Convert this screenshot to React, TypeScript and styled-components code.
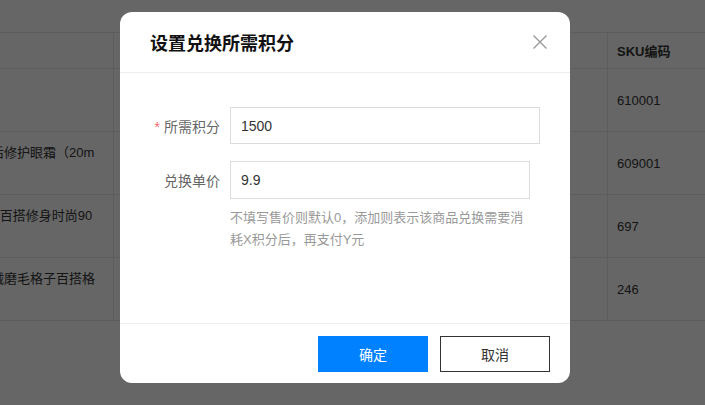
import React from 'react'
import styled, { createGlobalStyle } from 'styled-components'

const colors = {
  line: '#e8e8e8',
  text: '#333333',
  label: '#666666',
  hint: '#999999',
  primary: '#0081ff',
  required: '#f56c6c',
  inputBorder: '#dcdcdc',
}

const GlobalStyle = createGlobalStyle`
  html, body {
    margin: 0;
    padding: 0;
  }
  body {
    width: 705px;
    height: 405px;
    overflow: hidden;
    background: #ffffff;
    font-family: "Liberation Sans", "Noto Sans CJK SC", sans-serif;
  }
  * {
    box-sizing: border-box;
  }
`

const Page = styled.div`
  position: relative;
  width: 705px;
  height: 405px;
  overflow: hidden;
  padding-top: 32px;
`

const Table = styled.div`
  display: grid;
  grid-template-columns: 159px 494px 140px;
  margin-left: -45px;
  border-top: 1px solid ${colors.line};
`

interface CellProps {
  head?: boolean
  top?: boolean
}

const Cell = styled.div<CellProps>`
  display: flex;
  align-items: ${({ top }) => (top ? 'flex-start' : 'center')};
  height: ${({ head }) => (head ? '36px' : '63px')};
  padding: ${({ top }) => (top ? '11px 16px 0 10px' : '0 10px 0 9px')};
  border-right: 1px solid ${colors.line};
  border-bottom: 1px solid ${colors.line};
  font-size: 13px;
  font-weight: ${({ head }) => (head ? 'bold' : 'normal')};
  color: ${colors.text};
`

const ProductName = styled.span`
  display: block;
  height: 20px;
  line-height: 20px;
  overflow: hidden;
  word-break: break-all;
`

const Overlay = styled.div`
  position: absolute;
  inset: 0;
  background: rgba(0, 0, 0, 0.6);
  padding: 12px 0 0 120px;
`

const Modal = styled.div`
  width: 450px;
  height: 371px;
  background: #ffffff;
  border-radius: 12px;
  display: flex;
  flex-direction: column;
  overflow: hidden;
`

const ModalHeader = styled.div`
  height: 61px;
  display: flex;
  align-items: center;
  justify-content: space-between;
  padding: 0 20px 0 30px;
  border-bottom: 1px solid #eeeeee;
`

const Title = styled.h3`
  margin: 0;
  font-size: 18px;
  font-weight: bold;
  color: #111111;
`

const CloseButton = styled.button`
  width: 20px;
  height: 20px;
  padding: 0;
  border: none;
  background: none;
  display: flex;
  align-items: center;
  justify-content: center;
  cursor: pointer;
`

const ModalBody = styled.div`
  height: 251px;
  padding: 34px 0 0;
  display: flex;
  flex-direction: column;
  gap: 17px;
  border-bottom: 1px solid #eeeeee;
`

const FormItem = styled.div`
  display: grid;
  grid-template-columns: 100px auto;
  column-gap: 10px;
  align-items: center;
`

const Label = styled.label<{ required?: boolean }>`
  text-align: right;
  font-size: 14px;
  color: ${colors.label};

  &::before {
    content: ${({ required }) => (required ? "'*'" : "''")};
    color: ${colors.required};
    margin-right: 4px;
  }
`

const Input = styled.input<{ wide?: boolean }>`
  width: ${({ wide }) => (wide ? '310px' : '300px')};
  height: ${({ wide }) => (wide ? '37px' : '38px')};
  padding: 0 10px;
  border: 1px solid ${colors.inputBorder};
  border-radius: 0;
  outline: none;
  font-family: inherit;
  font-size: 14px;
  color: ${colors.text};
`

const Hint = styled.p`
  grid-column: 2;
  width: 300px;
  margin: 8px 0 0;
  font-size: 13px;
  line-height: 22px;
  color: ${colors.hint};
`

const ModalFooter = styled.div`
  flex: 1;
  display: flex;
  align-items: center;
  justify-content: flex-end;
  gap: 12px;
  padding: 1px 20px 0 0;
`

const Button = styled.button<{ primary?: boolean }>`
  width: 110px;
  height: 36px;
  font-family: inherit;
  font-size: 14px;
  cursor: pointer;
  border: 1px solid ${({ primary }) => (primary ? colors.primary : '#333333')};
  background: ${({ primary }) => (primary ? colors.primary : '#ffffff')};
  color: ${({ primary }) => (primary ? '#ffffff' : colors.text)};
`

const rows = [
  { name: '', sku: '610001' },
  { name: '熬夜后修护眼霜（20ml）', sku: '609001' },
  { name: '秋冬V百搭修身时尚90', sku: '697' },
  { name: '法兰绒磨毛格子百搭格子衬衫', sku: '246' },
]

const CloseIcon = () => (
  <svg width="16" height="16" viewBox="0 0 16 16">
    <path d="M1.5 1.5 L14.5 14.5 M14.5 1.5 L1.5 14.5" stroke="#999999" strokeWidth="1.4" fill="none" />
  </svg>
)

export default function App() {
  return (
    <Page>
      <GlobalStyle />
      <Table>
        <Cell head />
        <Cell head />
        <Cell head>SKU编码</Cell>
        {rows.map((row) => (
          <React.Fragment key={row.sku}>
            <Cell top>
              <ProductName>{row.name}</ProductName>
            </Cell>
            <Cell />
            <Cell>{row.sku}</Cell>
          </React.Fragment>
        ))}
      </Table>

      <Overlay>
        <Modal>
          <ModalHeader>
            <Title>设置兑换所需积分</Title>
            <CloseButton aria-label="关闭">
              <CloseIcon />
            </CloseButton>
          </ModalHeader>
          <ModalBody>
            <FormItem>
              <Label required>所需积分</Label>
              <Input wide defaultValue="1500" />
            </FormItem>
            <FormItem>
              <Label>兑换单价</Label>
              <Input defaultValue="9.9" />
              <Hint>不填写售价则默认0，添加则表示该商品兑换需要消耗X积分后，再支付Y元</Hint>
            </FormItem>
          </ModalBody>
          <ModalFooter>
            <Button primary>确定</Button>
            <Button>取消</Button>
          </ModalFooter>
        </Modal>
      </Overlay>
    </Page>
  )
}
